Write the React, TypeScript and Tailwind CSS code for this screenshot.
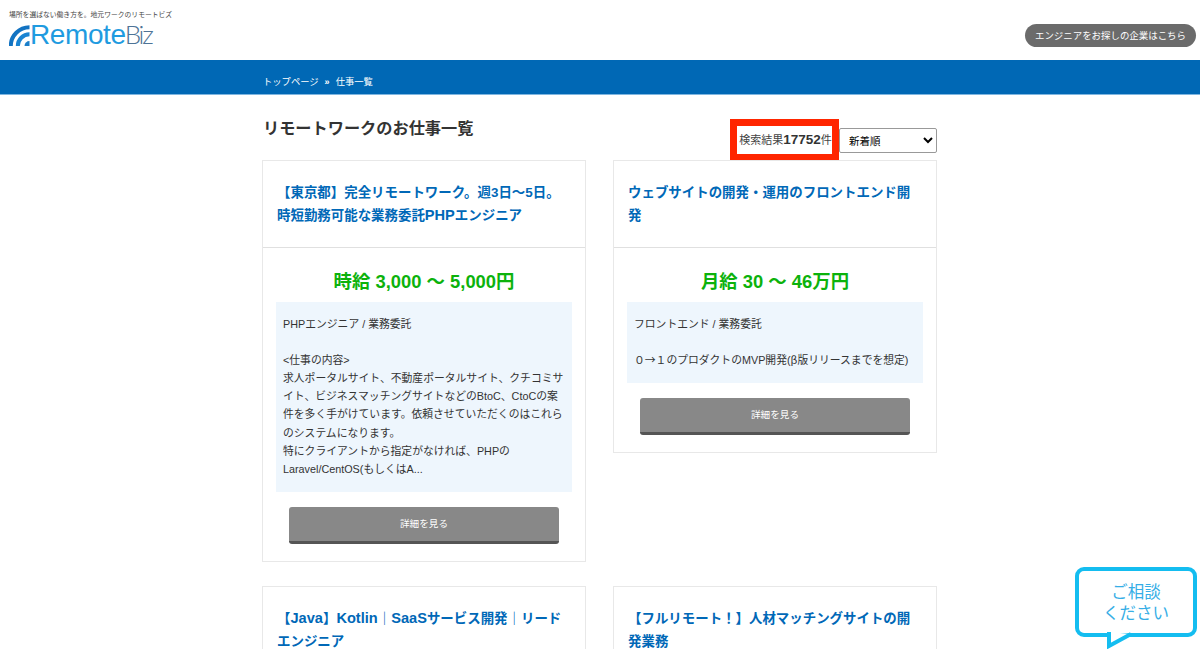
import React from "react";

const cjk = "font-['Noto_Sans_CJK_JP',sans-serif] leading-[0]";
const L = ({ children }: { children: React.ReactNode }) => <span className="text-[14.6px]">{children}</span>;

function Card({ title, salary, body }: { title: React.ReactNode; salary?: string; body?: React.ReactNode }) {
  return (
    <div className="w-[324px] border border-[#e8e8e8] bg-white">
      <div className="h-[86px] px-[14px] pt-[20px] text-[13.45px] font-bold leading-[23px] text-[#0068b7]">{title}</div>
      {salary && (
        <div className="border-t border-[#e0e0e0] px-[13px] pb-[17px]">
          <div className="h-[54px] pt-[21px] text-center text-[18.4px] font-bold leading-[26px] text-[#0cb20c]">{salary}</div>
          <div className="bg-[#eef6fd] px-[7px] pb-[14px] pt-[13px] text-[10.8px] leading-[18.1px] text-[#333]">{body}</div>
          <button className="mx-auto mt-[15px] block h-[37px] w-[270px] rounded-[3px] border-b-[3px] border-[#555] bg-[#888] text-[9.6px] text-white">詳細を見る</button>
        </div>
      )}
    </div>
  );
}

export default function App() {
  return (
    <div className="relative h-[649px] w-[1200px] overflow-hidden bg-white font-['Liberation_Sans','Noto_Sans_CJK_JP',sans-serif]">
      <header className="flex h-[60px] items-start justify-between pl-[9px] pr-[4px]">
        <div>
          <div className="mt-[10px] text-[6.8px] leading-[9px] text-[#444]">場所を選ばない働き方を。地元ワークのリモートビズ</div>
          <div className="mt-[3px] flex h-[25px] items-end">
            <svg width="25" height="23" viewBox="0 0 25 23" className="shrink-0">
              <path d="M1.8 22 A18.7 18.7 0 0 1 20.5 3.3" fill="none" stroke="#1273c2" strokeWidth="4" />
              <path d="M8.8 22 A11.7 11.7 0 0 1 20.5 10.3" fill="none" stroke="#1a84d2" strokeWidth="4" />
              <path d="M20.5 22 H15.5 A5 5 0 0 1 20.5 17 Z" fill="#1a7fca" />
            </svg>
            <span className="ml-[-4px] text-[28px] leading-[25px] tracking-[-0.4px]">
              <span className="text-[#1f9be0]">Remote</span>
              <span className="ml-[-1px] font-['Lato'] text-[26px] font-light tracking-[-2.2px] text-[#4d7396]">Biz</span>
            </span>
          </div>
        </div>
        <a className="mt-[24px] rounded-full bg-[#6b6b6b] px-[10px] py-[5px] text-[9.45px] leading-[13px] text-white">エンジニアをお探しの企業はこちら</a>
      </header>

      <nav className="h-[35px] border-b border-[#7fb6e0] bg-[#0068b5]">
        <div className="ml-[263px] flex h-[34px] items-center pt-[11px] text-[9.3px] text-white">
          <span>トップページ</span>
          <span className="mx-[6px] text-[9px] font-bold">»</span>
          <span>仕事一覧</span>
        </div>
      </nav>

      <main className="ml-[262px] w-[675px]">
        <div className="flex h-[65px] items-start justify-between">
          <h1 className="ml-px mt-[21px] text-[16.2px] font-bold leading-[24px] text-[#333]">リモートワークのお仕事一覧</h1>
          <div className="mt-[24px] flex">
            <div className="flex h-[42px] w-[109px] items-center justify-center border-[7px] border-[#ff2600] pl-[2px] text-[11px] text-[#444]">
              検索結果<b className="text-[13.5px] text-[#333]">17752</b>件
            </div>
            <select className="mt-[9px] h-[25px] w-[98px] rounded-[2px] border border-[#999] bg-white pl-[5px] text-[10.5px] text-black" defaultValue="新着順">
              <option>新着順</option>
            </select>
          </div>
        </div>

        <div className="flex items-start justify-between">
          <Card
            title={<>【東京都】完全リモートワーク。週3日〜5日。<br />時短勤務可能な業務委託<L>PHP</L>エンジニア</>}
            salary="時給 3,000 〜 5,000円"
            body={
              <>
                PHPエンジニア / 業務委託
                <br /><br />
                &lt;仕事の内容&gt;
                <br />
                求人ポータルサイト、不動産ポータルサイト、クチコミサイト、ビジネスマッチングサイトなどのBtoC、CtoCの案件を多く手がけています。依頼させていただくのはこれらのシステムになります。
                <br />
                特にクライアントから指定がなければ、PHPのLaravel/CentOS(もしくはA...
              </>
            }
          />
          <Card
            title="ウェブサイトの開発・運用のフロントエンド開発"
            salary="月給 30 〜 46万円"
            body={
              <>
                フロントエンド / 業務委託
                <br /><br />
                ０<span className={cjk}>→</span>１のプロダクトのMVP開発(<span className={cjk}>β</span>版リリースまでを想定)
              </>
            }
          />
        </div>

        <div className="mt-[24px] flex items-start justify-between">
          <Card title={<>【<L>Java</L>】<L>Kotlin</L>｜<L>SaaS</L>サービス開発｜リード<br />エンジニア</>} />
          <Card title="【フルリモート！】人材マッチングサイトの開発業務" />
        </div>
      </main>

      <div className="absolute left-[1075px] top-[567px] flex h-[70px] w-[122px] flex-col items-center justify-center rounded-[9px] border-[4px] border-[#14bdf0] bg-white pt-[2px] text-[16.5px] leading-[21px] text-[#36aee6]">
        <span>ご相談</span>
        <span>ください</span>
      </div>
      <svg className="absolute left-[1107px] top-[632px]" width="30" height="17" viewBox="0 0 30 17">
        <path d="M2 0 V14 L24 2" fill="#fff" stroke="#14bdf0" strokeWidth="4" />
      </svg>
    </div>
  );
}
